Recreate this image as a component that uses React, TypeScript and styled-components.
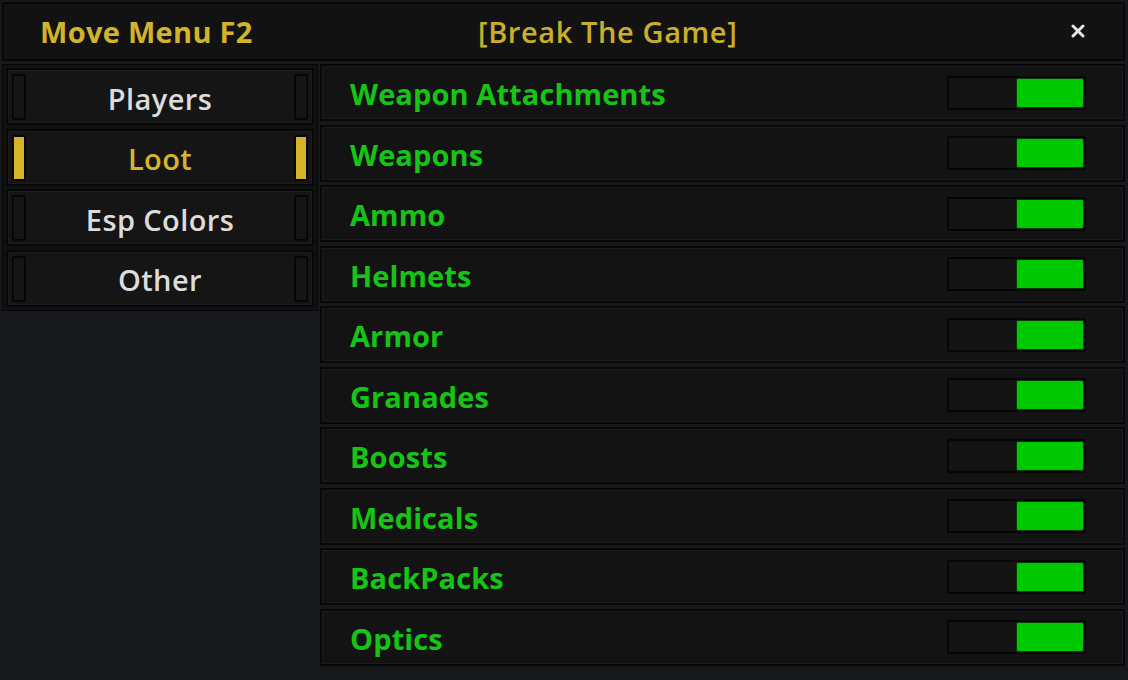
import { useState } from 'react';
import styled, { createGlobalStyle } from 'styled-components';

const tabs = ['Players', 'Loot', 'Esp Colors', 'Other'];

const lootItems = [
  'Weapon Attachments',
  'Weapons',
  'Ammo',
  'Helmets',
  'Armor',
  'Granades',
  'Boosts',
  'Medicals',
  'BackPacks',
  'Optics',
];

export default function App() {
  const [activeTab, setActiveTab] = useState('Loot');
  const [enabled, setEnabled] = useState<Record<string, boolean>>(
    Object.fromEntries(lootItems.map((item) => [item, true]))
  );

  const toggle = (item: string) => {
    setEnabled((prev) => ({ ...prev, [item]: !prev[item] }));
  };

  return (
    <>
      <GlobalStyle />
      <Window>
        <Header>
          <MenuTitle>Move Menu F2</MenuTitle>
          <GameTitle>[Break The Game]</GameTitle>
          <CloseButton aria-label="Close">
            <svg width="14" height="14" viewBox="0 0 14 14">
              <path
                d="M2 2 L12 12 M12 2 L2 12"
                stroke="#e6e6e6"
                strokeWidth="3"
                strokeLinecap="round"
              />
            </svg>
          </CloseButton>
        </Header>
        <Body>
          <Sidebar>
            {tabs.map((tab) => (
              <TabButton
                key={tab}
                $active={tab === activeTab}
                onClick={() => setActiveTab(tab)}
              >
                <Indicator $active={tab === activeTab} />
                <TabLabel $active={tab === activeTab}>{tab}</TabLabel>
                <Indicator $active={tab === activeTab} />
              </TabButton>
            ))}
          </Sidebar>
          <OptionList>
            {lootItems.map((item) => (
              <OptionRow key={item}>
                <OptionLabel>{item}</OptionLabel>
                <Toggle onClick={() => toggle(item)}>
                  <Knob $on={enabled[item]} />
                </Toggle>
              </OptionRow>
            ))}
          </OptionList>
        </Body>
      </Window>
    </>
  );
}

const GlobalStyle = createGlobalStyle`
  html, body {
    margin: 0;
    padding: 0;
    background: #17181c;
  }
  body {
    font-family: 'Open Sans', 'DejaVu Sans', sans-serif;
  }
`;

const Window = styled.div`
  width: 1128px;
  height: 680px;
  box-sizing: border-box;
  padding: 2px 3px 0 2px;
  display: flex;
  flex-direction: column;
  gap: 3px;
`;

const Header = styled.div`
  height: 59px;
  box-sizing: border-box;
  background: #121212;
  border: 2px solid #080808;
  display: grid;
  grid-template-columns: 474px auto 1fr;
  align-items: center;
`;

const MenuTitle = styled.div`
  padding-left: 36px;
  color: #d2b42a;
  font-size: 29px;
  font-weight: 700;
  letter-spacing: 0.3px;
`;

const GameTitle = styled.div`
  color: #c9ae2a;
  font-size: 29px;
  font-weight: 600;
  letter-spacing: 0.6px;
`;

const CloseButton = styled.button`
  justify-self: end;
  margin-right: 38px;
  margin-bottom: 2px;
  background: none;
  border: none;
  padding: 0;
  display: flex;
  cursor: pointer;
`;

const Body = styled.div`
  display: grid;
  grid-template-columns: 316px 1fr;
  gap: 2px;
  align-items: start;
`;

const Sidebar = styled.div`
  box-sizing: border-box;
  background: #111111;
  border: 1px solid #070707;
  padding: 3px 3px;
  display: flex;
  flex-direction: column;
  gap: 3.5px;
`;

const TabButton = styled.div<{ $active: boolean }>`
  height: 57px;
  box-sizing: border-box;
  background: #151515;
  border: 2px solid #080808;
  box-shadow: inset 0 0 0 1px #1d1d1d;
  display: grid;
  grid-template-columns: 14px 1fr 14px;
  align-items: center;
  padding: 4px 4px;
  cursor: pointer;
`;

const Indicator = styled.div<{ $active: boolean }>`
  height: 46px;
  box-sizing: border-box;
  border-radius: 2px;
  border: 2px solid #070707;
  background: ${(p) => (p.$active ? '#d3b42b' : '#161616')};
`;

const TabLabel = styled.div<{ $active: boolean }>`
  text-align: center;
  padding-top: 2px;
  color: ${(p) => (p.$active ? '#d5b62a' : '#dcdcdc')};
  font-size: 29px;
  font-weight: 600;
  letter-spacing: 0.4px;
`;

const OptionList = styled.div`
  display: flex;
  flex-direction: column;
  gap: 3.5px;
`;

const OptionRow = styled.div`
  height: 57px;
  box-sizing: border-box;
  background: #131313;
  border: 2px solid #080808;
  box-shadow: inset 0 0 0 1px #1c1c1c;
  display: flex;
  align-items: center;
  justify-content: space-between;
  padding: 0 37px 0 28px;
`;

const OptionLabel = styled.div`
  padding-top: 2px;
  color: #16c416;
  font-size: 29px;
  font-weight: 700;
  letter-spacing: 0.1px;
`;

const Toggle = styled.div`
  width: 139px;
  height: 34px;
  box-sizing: border-box;
  background: #141414;
  border: 2px solid #060606;
  border-radius: 2px;
  display: flex;
  cursor: pointer;
`;

const Knob = styled.div<{ $on: boolean }>`
  width: 66px;
  margin-left: ${(p) => (p.$on ? 'auto' : '0')};
  background: ${(p) => (p.$on ? '#00c800' : '#2a2a2a')};
  border: 1px solid #053a05;
  border-radius: 2px;
`;
